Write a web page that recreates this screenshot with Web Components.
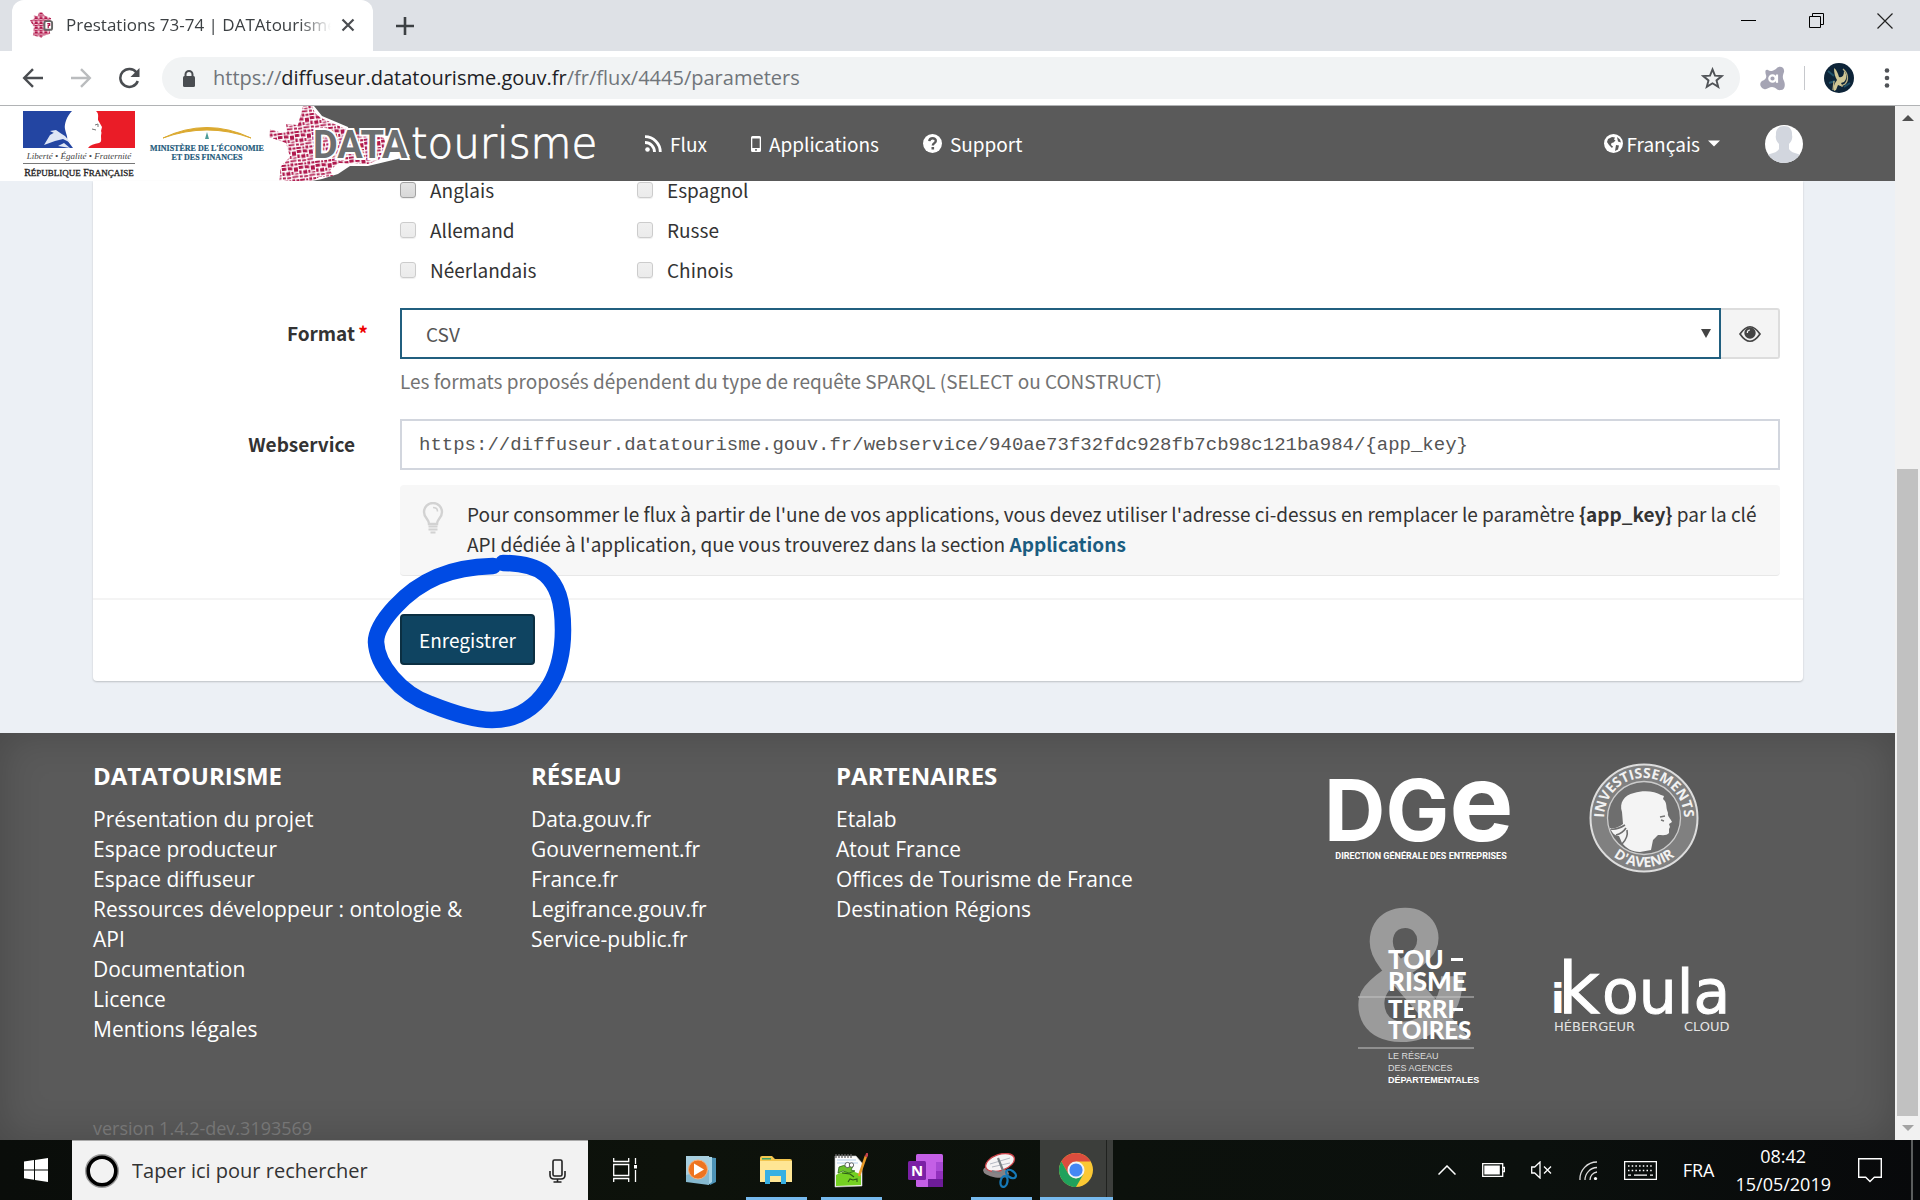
<!DOCTYPE html>
<html lang="fr">
<head>
<meta charset="utf-8">
<title>Prestations 73-74 | DATAtourisme</title>
<style>
  html, body { margin: 0; height: 100%; }
  body { overflow: hidden; }
</style>
</head>
<body>
<desktop-screen>
  <browser-tabs slot="browser"></browser-tabs>
  <address-bar slot="browser"></address-bar>
  <site-header slot="page"></site-header>
  <feed-form slot="page"></feed-form>
  <site-footer slot="page">
    <footer-links heading="DATATOURISME">
      <a href="#projet">Présentation du projet</a>
      <a href="#producteur">Espace producteur</a>
      <a href="#diffuseur">Espace diffuseur</a>
      <a href="#ressources">Ressources développeur : ontologie &amp; API</a>
      <a href="#documentation">Documentation</a>
      <a href="#licence">Licence</a>
      <a href="#mentions">Mentions légales</a>
    </footer-links>
    <footer-links heading="RÉSEAU">
      <a href="#data">Data.gouv.fr</a>
      <a href="#gouvernement">Gouvernement.fr</a>
      <a href="#france">France.fr</a>
      <a href="#legifrance">Legifrance.gouv.fr</a>
      <a href="#service-public">Service-public.fr</a>
    </footer-links>
    <footer-links heading="PARTENAIRES">
      <a href="#etalab">Etalab</a>
      <a href="#atout-france">Atout France</a>
      <a href="#offices">Offices de Tourisme de France</a>
      <a href="#destination">Destination Régions</a>
    </footer-links>
    <partner-logos></partner-logos>
  </site-footer>
  <scroll-bar slot="scroll"></scroll-bar>
  <task-bar slot="taskbar"></task-bar>
</desktop-screen>

<script>
function define(name, html, setup) {
  const tpl = document.createElement('template');
  tpl.innerHTML = html;
  customElements.define(name, class extends HTMLElement {
    constructor() {
      super();
      this.attachShadow({ mode: 'open' }).appendChild(tpl.content.cloneNode(true));
    }
    connectedCallback() { if (setup) setup(this, this.shadowRoot); }
  });
}

define('desktop-screen', `
<style>
  :host { display: flex; flex-direction: column; height: 100vh; overflow: hidden;
    --source: "Noto Sans CJK SC", "Open Sans", sans-serif;
    --open: "Open Sans", "Noto Sans", sans-serif;
    font-family: var(--source); background: #fff; }
  .view { flex: 1; min-height: 0; display: flex; border-top: 1px solid #b1b3b5; }
  .page { flex: 1; min-width: 0; display: flex; flex-direction: column; overflow: hidden; background: #ecf0f5; }
</style>
<slot name="browser"></slot>
<div class="view"><div class="page"><slot name="page"></slot></div><slot name="scroll"></slot></div>
<slot name="taskbar"></slot>
`);

define('browser-tabs', `
<style>
  :host { display: flex; height: 51px; background: #dee1e6; font-family: var(--open); }
  .tab { display: flex; align-items: center; width: 361px; margin-left: 12px; box-sizing: border-box;
    padding: 0 18px 2px 18px; background: #fff; border-radius: 12px 12px 0 0; color: #3c4043; }
  .title { flex: 1; margin: 0 10px 0 12px; overflow: hidden; white-space: nowrap; font-size: 17px; line-height: 24px;
    -webkit-mask-image: linear-gradient(90deg, #000 88%, transparent); mask-image: linear-gradient(90deg, #000 88%, transparent); }
  button { border: 0; padding: 0; background: none; display: flex; align-items: center; justify-content: center; }
  .new { width: 40px; margin-left: 12px; }
  .win { margin-left: auto; display: flex; height: 42px; padding-right: 1px; }
  .win button { width: 68px; }
</style>
<div class="tab">
  <svg width="24" height="26" viewBox="0 0 25 26"><defs><pattern id="t" width="5" height="5" patternUnits="userSpaceOnUse"><path d="M0 0h3v2H0zM3.500 1h1v3h-1zM0 3h2.800v1.500H0z" fill="#b0184c"/></pattern></defs>
    <path d="M9 0h4l2 3 7 3-2 8 1 8-6 2-3 2-9-2 1-9-4-7 4-1V3l4 1z" fill="#f3c9d6"/><path d="M9 0h4l2 3 7 3-2 8 1 8-6 2-3 2-9-2 1-9-4-7 4-1V3l4 1z" fill="url(#t)"/>
    <rect x="15" y="9" width="8" height="9" rx="2" fill="#fff" stroke="#666" stroke-width="2"/><path d="M18 11.500h2.500v2H19v3" fill="none" stroke="#b0184c" stroke-width="1.300"/></svg>
  <span class="title">Prestations 73-74 | DATAtourisme</span>
  <button aria-label="Fermer l'onglet"><svg width="14" height="14" viewBox="0 0 14 14"><path d="M1.500 1.500l11 11m0-11l-11 11" stroke="#4a4d51" stroke-width="2.200"/></svg></button>
</div>
<button class="new" aria-label="Nouvel onglet"><svg width="18" height="18" viewBox="0 0 18 18"><path d="M9 0v18M0 9h18" stroke="#3c4043" stroke-width="2.600"/></svg></button>
<div class="win">
  <button aria-label="Réduire"><svg width="16" height="16" viewBox="0 0 16 16"><path d="M0 7.500h15" stroke="#000"/></svg></button>
  <button aria-label="Restaurer"><svg width="16" height="16" viewBox="0 0 16 16"><path d="M.500 3.500h11v11H.500zM3.500 3.500v-3h11v11h-3" fill="none" stroke="#000"/></svg></button>
  <button aria-label="Fermer"><svg width="16" height="16" viewBox="0 0 16 16"><path d="M.500.500l15 15m0-15l-15 15" stroke="#222" stroke-width="1.200"/></svg></button>
</div>
`);

define('address-bar', `
<style>
  :host { display: flex; align-items: center; height: 54px; padding: 0 30px 0 22px; background: #fff; font-family: var(--open); }
  button { border: 0; padding: 0; background: none; display: flex; }
  .nav { display: flex; gap: 26px; margin-right: 22px; align-items: center; }
  .box { flex: 1; display: flex; align-items: center; box-sizing: border-box; height: 42px; border-radius: 21px;
    background: #f1f3f4; padding: 0 16px 0 20px; }
  .url { flex: 1; margin-left: 17px; font-size: 20px; line-height: 28px; color: #70757a; white-space: nowrap; }
  .url b { font-weight: 400; color: #202124; }
  .right { display: flex; align-items: center; margin-left: 20px; }
  .sep { width: 1px; height: 24px; background: #c6c8cc; margin: 0 19px; }
  .dots { margin-left: 30px; }
</style>
<div class="nav">
  <button aria-label="Précédent"><svg width="22" height="20" viewBox="0 0 22 20"><path d="M21 10H2.500M11 1.200L2.200 10l8.800 8.800" fill="none" stroke="#4a4d51" stroke-width="2.400"/></svg></button>
  <button aria-label="Suivant"><svg width="22" height="20" viewBox="0 0 22 20"><path d="M1 10h18.500M11 1.200l8.800 8.800-8.800 8.800" fill="none" stroke="#babcbe" stroke-width="2.400"/></svg></button>
  <button aria-label="Actualiser"><svg width="22" height="22" viewBox="0 0 22 22"><path d="M18.500 5.500A9 9 0 1 0 19.800 14" fill="none" stroke="#4a4d51" stroke-width="2.500"/><path d="M21.500 1v9h-9z" fill="#4a4d51"/></svg></button>
</div>
<div class="box">
  <svg width="14" height="17" viewBox="0 0 14 17"><rect x="1" y="6" width="12" height="11" rx="1.500" fill="#4a4d51"/><path d="M3.500 7V4.500a3.500 3.500 0 0 1 7 0V7" fill="none" stroke="#4a4d51" stroke-width="2"/></svg>
  <span class="url">https://<b>diffuseur.datatourisme.gouv.fr</b>/fr/flux/4445/parameters</span>
  <button aria-label="Favori"><svg width="23" height="22" viewBox="0 0 24 23"><path d="M12 2.500l2.600 6.500 7 .500-5.400 4.500 1.800 6.800-6-3.800-6 3.800 1.800-6.800L2.400 9.500l7-.500z" fill="none" stroke="#505357" stroke-width="2"/></svg></button>
</div>
<div class="right">
  <svg width="25" height="25" viewBox="0 0 25 25"><path d="M8 4c2 2 5 1 8-1 3-4 9-2 8 3-1 3-2 5 0 9 2 5 0 9-3 9-4 1-5-3-9-3-3 0-5 3-8 2-4-1-5-6-2-8 3-1 5-3 4-6-1-3-1-6 2-5z" fill="#a5a4b4"/><circle cx="12.500" cy="12.500" r="3.200" fill="none" stroke="#fff" stroke-width="2.200"/><path d="M17 8.500v8.300" stroke="#fff" stroke-width="2.200"/></svg>
  <span class="sep"></span>
  <svg width="30" height="30" viewBox="0 0 30 30"><circle cx="15" cy="15" r="15" fill="#0d2438"/><path d="M4 8l6 5M20 24l6-4M5 20l6-2" stroke="#1f5168" stroke-width="2"/><path d="M10 5c3 2 4 6 5 9 3 1 5-1 5-6 3 3 3 8 0 11l-3 1 2 4-5-2-2 5-2 1c-1-5 1-8 3-11-2-3-3-7-3-12z" fill="#cfc695"/><path d="M19 6c5 4 6 11 2 15l-4 2M10 18l-1 9" fill="none" stroke="#b9b184" stroke-width="1.300"/></svg>
  <svg class="dots" width="6" height="22" viewBox="0 0 6 22"><g fill="#505357"><circle cx="3" cy="3.500" r="2.300"/><circle cx="3" cy="11" r="2.300"/><circle cx="3" cy="18.500" r="2.300"/></g></svg>
</div>
`);

define('brand-logos', `
<style>:host { display: block; flex: none; } svg { display: block; }</style>
<svg width="602" height="75" viewBox="0 0 602 75">
  <defs>
    <pattern id="m" width="17" height="16" patternUnits="userSpaceOnUse" patternTransform="rotate(-7)">
      <path d="M0 0h4.500v3H0zM6 0l4.500.500V3.500L6 3zM12 1h4v4.500h-4zM0 4.500h2.500v3.500H0zM4 5l4-.500V8.500H4zM9.200 5h2v3H9.200zM9.500 9.500h6v1.800h-6zM12.500 7h3.500v1.300h-3.500zM0 9.500h3v2H0zM4.200 10h4v1.800h-4zM0 13h4.800v2H0zM6 13.200h2v2H6zM9.200 12.600h2.800v2.800H9.200zM13.200 13h3v2.200h-3z" fill="#b01a4e"/>
    </pattern>
  </defs>
  <path d="M0 0H314L322 10L348 21L350 28L392 30L410 50L368 60L350 60L338 68L322 73L312 75H0z" fill="#fff"/>
  <path d="M303 0h9l3 7 6 5 27 12 36 8 4 18-20 8-29-1-9 7 3 6-14 1-13 8-11 4-16-6 2-17 9-9-4-14-17-6 1-8 9 3h8l-1-8 12 1z" fill="url(#m)"/>
  <path d="M23 5h49c-5 5-8 13-7 18 1 5 3 8 2 11l6 8H23z" fill="#2345a2"/>
  <path d="M44 39l6-10 7-4 8 5 6 7-8-4-8 2zM50 25l6-1 10 7-6-1zM58 40l6-3 6 5z" fill="#dfe6f5"/>
  <path d="M96 5h39v37H88c2-3 6-4 11-5 3-1 2-4 2-7 0-2 1-3 0-5l1-4-4-7c0-4 1-6-2-9z" fill="#ea1c27"/>
  <path d="M95 19l3-1v3M92 23l4 1" stroke="#777" stroke-width="1" fill="none"/>
  <text x="79" y="53" font-family="Liberation Serif, serif" font-style="italic" font-size="9" text-anchor="middle" fill="#444">Liberté • Égalité • Fraternité</text>
  <path d="M23 57.500h112" stroke="#777"/>
  <text x="79" y="70" font-family="Liberation Serif, serif" font-size="10" text-anchor="middle" fill="#222" stroke="#222" stroke-width=".300">R<tspan font-size="9">ÉPUBLIQUE</tspan> F<tspan font-size="9">RANÇAISE</tspan></text>
  <path d="M163 32q44-21 88 0-44-16-88 0z" fill="#dba92f" stroke="#dba92f"/>
  <path d="M207 26l2 7h-4z" fill="#4d9c99"/>
  <text x="207" y="45" font-family="Liberation Serif, serif" font-weight="700" font-size="8" text-anchor="middle" fill="#1f5b7c" stroke="#1f5b7c" stroke-width=".200">MINISTÈRE DE L'ÉCONOMIE</text>
  <text x="207" y="54" font-family="Liberation Serif, serif" font-weight="700" font-size="8" text-anchor="middle" fill="#1f5b7c" stroke="#1f5b7c" stroke-width=".200">ET DES FINANCES</text>
  <text x="313" y="52" font-family="Roboto, sans-serif" font-weight="700" font-size="38" fill="#6c6f71" stroke="#fff" stroke-width="4" paint-order="stroke">DATA</text>
  <text x="411" y="52" font-family="DejaVu Sans, sans-serif" font-weight="200" font-size="42" fill="#fff" stroke="#fff" stroke-width=".800">tourisme</text>
</svg>
`);

define('nav-link', `
<style>
  :host { display: block; }
  a { display: flex; align-items: center; gap: var(--gap, 8px); color: #fff; text-decoration: none; font-size: 19px; line-height: 28px; }
  ::slotted(svg) { display: block; }
</style>
<a href="#nav"><slot name="icon"></slot><slot></slot></a>
`);

define('site-header', `
<style>
  :host { display: flex; align-items: center; height: 75px; flex: none; background: #5a5a5a; padding-right: 92px; }
  nav { display: flex; gap: 44px; margin-left: 43px; flex: 1; }
  .lang { --gap: 3px; margin-right: 45px; }
  .lang .caret { margin-left: 5px; }
  .avatar { display: block; }
</style>
<brand-logos></brand-logos>
<nav>
  <nav-link><svg slot="icon" width="17" height="17" viewBox="0 0 17 17"><circle cx="2.500" cy="14.500" r="2.300" fill="#fff"/><path d="M0 7.500A9.500 9.500 0 0 1 9.500 17M0 1.700A15.300 15.300 0 0 1 15.300 17" fill="none" stroke="#fff" stroke-width="2.800"/></svg>Flux</nav-link>
  <nav-link><svg slot="icon" width="10" height="16" viewBox="0 0 10 16"><path fill-rule="evenodd" d="M1.500 0h7Q10 0 10 1.500v13Q10 16 8.500 16h-7Q0 16 0 14.500v-13Q0 0 1.500 0zM1.300 2.500v9.500h7.400V2.500zM4.200 13v1.700h1.600V13z" fill="#fff"/></svg>Applications</nav-link>
  <nav-link><svg slot="icon" width="19" height="19" viewBox="0 0 19 19"><circle cx="9.500" cy="9.500" r="9.500" fill="#fff"/><path d="M6.300 7.200c.300-4 6.700-3.700 6.500-.300 0 2.200-3 2.200-3 4.600" fill="none" stroke="#5a5a5a" stroke-width="2.400"/><rect x="8.500" y="13" width="2.600" height="2.500" fill="#5a5a5a"/></svg>Support</nav-link>
</nav>
<nav-link class="lang"><svg slot="icon" width="19" height="19" viewBox="0 0 19 19"><circle cx="9.500" cy="9.500" r="9.500" fill="#fff"/><path d="M4 5l4-2 3 .500-1 2 1.500 1-2 2-2 .500-.500 2 2 1.500-1 1.500-3-3-2-3zM13 3l3 2.500 1 3-3-1zM12 11l3 .500-1 4-3 1.500z" fill="#5a5a5a"/></svg>Français<svg class="caret" width="12" height="7" viewBox="0 0 12 7"><path d="M0 .500h12L6 6.500z" fill="#fff"/></svg></nav-link>
<svg class="avatar" width="38" height="38" viewBox="0 0 38 38"><defs><clipPath id="c"><circle cx="19" cy="19" r="19"/></clipPath></defs><g clip-path="url(#c)"><rect width="38" height="38" fill="#fff"/><path d="M19 1c6 0 8.500 4 8 9 1 4-1 7-3 9v5c2 4 8 4 11 6v9H3v-9c3-2 9-2 11-6v-5c-2-2-4-5-3-9-.500-5 2-9 8-9z" fill="#d2d6de"/></g></svg>
`);

define('form-row', `
<style>
  :host { display: grid; grid-template-columns: 307px 1fr; padding-right: 23px; }
  .label { display: flex; justify-content: flex-end; align-items: center; height: 50px; padding-right: 32px; font-weight: 700; }
  .mark { width: 13px; }
</style>
<div class="label"><slot name="label"></slot><slot name="mark"><span class="mark"></span></slot></div>
<div><slot></slot></div>
`);

define('feed-form', `
<style>
  :host { display: block; flex: none; padding: 0 92px 52px 93px; color: #333; font-size: 19px; line-height: 30px; }
  .panel { background: #fff; border-radius: 0 0 4px 4px; box-shadow: 0 1px 2px rgba(0,0,0,.2); position: relative; }
  .langs { display: grid; grid-template-columns: 237px 1fr; row-gap: 22px; margin-left: 307px; padding-bottom: 29px; }
  .langs label { display: flex; align-items: center; gap: 14px; height: 18px; line-height: 18px; }
  .langs input { appearance: none; box-sizing: border-box; width: 16px; height: 16px; margin: 0; border: 1px solid #ccc; border-radius: 3px;
    background: linear-gradient(#f0f0f0, #ebebeb); box-shadow: 0 1px 1px #eee; }
  .langs input.on { border-color: #a2a2a2; background: linear-gradient(#e4e4e4, #d8d8d8); }
  .star { width: 13px; text-align: right; color: #e00; }
  .group { display: flex; position: relative; }
  select, input.url { box-sizing: border-box; height: 51px; border: 2px solid #d2d6de; border-radius: 0; background: #fff; color: #555; width: 100%; }
  select { appearance: none; flex: 1; min-width: 0; padding: 0 24px; border-color: #215f7f; font: 19px var(--source); outline: 0; }
  .arrow { position: absolute; right: 69px; top: 21px; pointer-events: none; }
  .eye { width: 59px; box-sizing: border-box; border: 2px solid #ddd; border-left: 0; border-radius: 0 3px 3px 0; background: #f4f4f4;
    display: flex; align-items: center; justify-content: center; padding: 0; }
  .help { margin: 7px 0 23px; color: #737373; }
  input.url { display: block; padding: 0 17px; font: 19px/36px "Liberation Mono", monospace; }
  .tip { display: flex; margin-top: 15px; padding: 14px 15px 16px 22px; background: #f7f7f7; border-bottom: 1px solid #e8e8e8; border-radius: 4px; }
  .tip svg { flex: none; margin: 3px 23px 0 0; }
  .tip p { margin: 0; }
  a { color: #1b5c80; font-weight: 700; text-decoration: none; }
  .actions { margin-top: 22px; border-top: 2px solid #f4f4f4; padding: 14px 0 16px 307px; }
  .save { display: block; box-sizing: border-box; width: 135px; height: 51px; border: 2px solid #0b2f42; border-radius: 4px; background: #0f4461; color: #fff; padding: 0;
    font: 19px var(--source); }
  .ring { position: absolute; left: 267px; top: 370px; pointer-events: none; z-index: 2; }
</style>
<div class="panel">
  <div class="langs">
    <label><input type="checkbox" class="on">Anglais</label><label><input type="checkbox">Espagnol</label>
    <label><input type="checkbox">Allemand</label><label><input type="checkbox">Russe</label>
    <label><input type="checkbox">Néerlandais</label><label><input type="checkbox">Chinois</label>
  </div>
  <form-row>
    <label slot="label" for="format">Format</label><span slot="mark" class="star">*</span>
    <div class="group">
      <select id="format"><option>CSV</option></select>
      <svg class="arrow" width="10" height="9" viewBox="0 0 10 9"><path d="M0 0h10L5 9z" fill="#444"/></svg>
      <button class="eye" aria-label="Aperçu"><svg width="22" height="18" viewBox="0 0 22 18"><path d="M1 9Q11-5.500 21 9 11 23.500 1 9z" fill="none" stroke="#444" stroke-width="1.700"/><circle cx="11" cy="8" r="5.700" fill="#444"/><path d="M8.300 8c0-2 1-3 2.700-3" fill="none" stroke="#f4f4f4" stroke-width="1.200"/></svg></button>
    </div>
    <p class="help">Les formats proposés dépendent du type de requête SPARQL (SELECT ou CONSTRUCT)</p>
  </form-row>
  <form-row>
    <label slot="label" for="ws">Webservice</label>
    <input class="url" id="ws" type="text" value="https://diffuseur.datatourisme.gouv.fr/webservice/940ae73f32fdc928fb7cb98c121ba984/{app_key}">
    <div class="tip">
      <svg width="22" height="32" viewBox="0 0 22 32"><path d="M7 22c0-5-5-6-5-12a9 9 0 0 1 18 0c0 6-5 7-5 12z" fill="none" stroke="#d2d2d2" stroke-width="2.400"/><path d="M11 5.500c3 0 4.500 1.800 4.500 4" fill="none" stroke="#d2d2d2" stroke-width="1.600"/><path d="M6.500 24.500h9M6.500 27.500h9M8.500 30.500h5" stroke="#d2d2d2" stroke-width="2.200"/></svg>
      <p>Pour consommer le flux à partir de l'une de vos applications, vous devez utiliser l'adresse ci-dessus en remplacer le paramètre <b>{app_key}</b> par la clé API dédiée à l'application, que vous trouverez dans la section <a href="#applications">Applications</a></p>
    </div>
  </form-row>
  <div class="actions"><button class="save">Enregistrer</button></div>
  <svg class="ring" width="220" height="190" viewBox="360 551 220 190"><path d="M493 566C450 567 420 580 395 607 383 620 376 632 376 642 377 665 400 693 430 704 455 714 475 720 492 720 520 720 538 705 550 685 560 668 563 650 563 630 563 600 557 585 545 574 535 566 520 563 503 563" fill="none" stroke="#004be4" stroke-width="16.500" stroke-linecap="round"/></svg>
</div>
`);

define('footer-links', `
<style>
  :host { display: block; padding-right: 40px; }
  h2 { margin: 0 0 13px; font-size: 24px; line-height: 30px; font-weight: 700; color: #fff; }
  ::slotted(a) { display: block; color: #fff; text-decoration: none; font-size: 21px; line-height: 30px; }
</style>
<h2></h2><slot></slot>
`, (el, root) => { root.querySelector('h2').textContent = el.getAttribute('heading'); });

define('partner-logos', `
<style>
  :host { display: grid; grid-template-columns: 1fr 1fr; grid-template-rows: 110px 1fr; row-gap: 33px; justify-items: center; align-items: center; padding-top: 2px; }
  svg { display: block; overflow: visible; }
</style>
<svg width="180" height="84" viewBox="0 0 180 84" fill="#fff">
  <text x="-7" y="65" font-family="Inter, sans-serif" font-weight="700" font-size="85">DG<tspan font-size="108">e</tspan></text>
  <text x="90" y="83" font-size="9" text-anchor="middle" font-weight="700" font-family="Roboto, sans-serif">DIRECTION GÉNÉRALE DES ENTREPRISES</text>
</svg>
<svg width="110" height="110" viewBox="0 0 110 110">
  <defs><path id="dn" d="M6 55a49 49 0 0 0 98 0"/><path id="arc" d="M20.400 75A40 40 0 1 1 89.600 75"/></defs>
  <circle cx="55" cy="55" r="53.500" fill="#808080" stroke="#ddd" stroke-width="2"/><circle cx="55" cy="55" r="36.500" fill="#6e6e6e" stroke="#ccc" stroke-width="1.300"/>
  <text fill="#f2f2f2" font-family="Open Sans, sans-serif" font-weight="700" font-size="14" text-anchor="middle"><textPath href="#arc" startOffset="50%">INVESTISSEMENTS</textPath></text>
  <text fill="#f2f2f2" font-family="Open Sans, sans-serif" font-weight="700" font-size="14" text-anchor="middle"><textPath href="#dn" startOffset="50%">D'AVENIR</textPath></text>
  <path d="M33 49c-3-9 2-17 12-19 9-3 21-2 27 2l3 1-1 3c4 3 3 7 4 11l1 3c-1 3 3 6 4 9l-3 2 1 3-1 2v4c-2 3-7 2-11 2l-5 5-2 10-11 2c-8 0-14-4-18-9l-3-7c-4 0-7-3-9-8 5 1 9-1 13-4z" fill="#f4f4f4"/>
  <path d="M22 66c5 1 9-1 14-4M27 72c4-1 8-4 10-7M33 81c4-4 6-9 5-14" fill="none" stroke="#6e6e6e" stroke-width="1.600"/><path d="M71 54l5-1M72 57l3 1" stroke="#777" stroke-width="1.500"/>
</svg>
<svg width="125" height="180" viewBox="0 0 125 180" fill="#fff">
  <text x="-6" y="134" font-family="Roboto, sans-serif" font-weight="700" font-size="184" fill="#9b9b9b">&amp;</text>
  <g font-family="Lato, sans-serif" font-weight="900"><text x="30" y="63" font-size="26">TOU</text><text x="30" y="85" font-size="26">RISME</text><text x="30" y="112" font-size="24">TERRI</text><text x="30" y="133" font-size="24">TOIRES</text></g>
  <path d="M0 91h116M0 142h116" stroke="#c4c4c4"/><path d="M93 52h12v3H93zM95 102h10v3H95z"/>
  <g font-family="Liberation Sans, sans-serif" font-size="9" fill="#ddd"><text x="30" y="153">LE RÉSEAU</text><text x="30" y="165">DES AGENCES</text><text x="30" y="177" font-weight="700" fill="#fff">DÉPARTEMENTALES</text></g>
</svg>
<svg width="180" height="76" viewBox="0 0 180 76" fill="#fff" font-family="DejaVu Sans, sans-serif">
  <text x="-3" y="55" font-size="40" font-weight="700">i</text><text x="4" y="55" font-size="72" stroke="#fff">k</text><text x="48" y="55" font-size="60" stroke="#fff">oula</text>
  <g font-size="13" fill="#e4e4e4"><text x="0" y="73">HÉBERGEUR</text><text x="130" y="73">CLOUD</text></g>
</svg>
`);

define('site-footer', `
<style>
  :host { display: flex; flex-direction: column; flex: 1; min-height: 0; box-sizing: border-box; padding: 28px 92px 0 93px; background: #5a5a5a;
    box-shadow: inset 0 0 40px rgba(0,0,0,.2); font-family: var(--open); }
  .cols { display: grid; grid-template-columns: 438fr 305fr 473fr 446fr 48fr; }
  .version { margin: auto 0 -3px; font-size: 18px; line-height: 30px; color: #757575; }
</style>
<div class="cols"><slot></slot></div>
<p class="version">version 1.4.2-dev.3193569</p>
`);

define('scroll-bar', `
<style>
  :host { display: flex; flex-direction: column; width: 25px; background: #f1f1f1; }
  .cap { height: 24px; display: flex; align-items: center; justify-content: center; }
  .gap { flex: 339; } .thumb { flex: 647; margin: 0 2px; background: #c1c1c1; }
</style>
<div class="cap"><svg width="12" height="6" viewBox="0 0 12 6"><path d="M0 6h12L6 0z" fill="#505050"/></svg></div>
<div class="gap"></div><div class="thumb"></div>
<div class="cap"><svg width="12" height="6" viewBox="0 0 12 6"><path d="M0 0h12L6 6z" fill="#a3a3a3"/></svg></div>
`);

define('task-button', `
<style>
  :host { display: block; width: 75px; height: 60px; }
  button { width: 100%; height: 100%; border: 0; padding: 0; background: none; display: flex; align-items: center; justify-content: center; position: relative; }
  :host([open]) button::after { content: ""; position: absolute; left: 8px; right: 6px; bottom: 0; height: 3px; background: #76b9ed; }
  :host([active]) button { background: linear-gradient(90deg, transparent 2px, #3c3e3b 2px 68px, #20221f 68px 69px, #3c3e3b 69px); }
  :host([active]) button::after { left: 2px; right: 0; }
</style>
<button><slot></slot></button>
`, (el, root) => root.querySelector('button').setAttribute('aria-label', el.getAttribute('name')));

define('task-bar', `
<style>
  :host { display: flex; height: 60px; flex: none; background: linear-gradient(90deg, #0a0d0a, #0d120b 35%, #0b100d 80%, #08090b); color: #fff; font-family: var(--open); }
  svg { display: block; }
  .start { width: 72px; border: 0; padding: 0; background: none; display: flex; align-items: center; justify-content: center; }
  .search { display: flex; align-items: center; box-sizing: border-box; width: 516px; padding: 0 22px 0 13px; background: #f2f2f2; border-top: 1px solid #aaa; }
  .search input { flex: 1; min-width: 0; margin-left: 13px; border: 0; padding: 0; background: none; outline: 0; font: 20px var(--open); color: #333; }
  .search input::placeholder { color: #333; opacity: 1; }
  .tray { margin-left: auto; display: flex; align-items: center; font-size: 18px; }
  .tray svg { margin-right: 26px; }
  .fra { margin-right: 21px; }
  .clock { text-align: center; line-height: 28px; margin-right: 27px; }
  .tray .note { margin-right: 29px; }
  .peek { width: 7px; height: 60px; border-left: 2px solid #5b5d5d; }
</style>
<button class="start" aria-label="Démarrer"><svg width="24" height="24" viewBox="0 0 24 24"><path d="M0 3.500l10-1.400v9.300H0zM11 2l13-2v11.400H11zM0 12.400h10v9.400L0 20.300zM11 12.400h13V24l-13-2z" fill="#fff"/></svg></button>
<div class="search">
  <svg width="34" height="34" viewBox="0 0 34 34"><circle cx="17" cy="17" r="15.500" fill="none" stroke="#999" stroke-width="3"/><circle cx="17" cy="17" r="13.800" fill="none" stroke="#000" stroke-width="3.600"/></svg>
  <input type="text" aria-label="Rechercher" placeholder="Taper ici pour rechercher">
  <svg width="17" height="24" viewBox="0 0 17 24"><rect x="4" y="1" width="9" height="16" rx="1.500" fill="none" stroke="#222" stroke-width="1.600"/><path d="M1 12v4q0 4 4 4h7q4 0 4-4v-4M8.500 20v3M4.500 23h8" fill="none" stroke="#222" stroke-width="1.600"/></svg>
</div>
<task-button name="Vue des tâches"><svg width="25" height="24" viewBox="0 0 25 24"><path d="M.700 0v3.500h15V0M.700 6.500h15v11h-15zM.700 24v-3.500h15V24M22.500 0v6M22.500 12v12" fill="none" stroke="#fff" stroke-width="1.300"/><path d="M21 7h3v3.500h-3z" fill="#fff"/></svg></task-button>
<task-button name="Lecteur multimédia"><svg width="30" height="31" viewBox="0 0 30 31"><path d="M8 1l22 2v24l-6 3z" fill="#4d93b7"/><path d="M5 1l21 1v25l-4 3z" fill="#a5d3e6"/><path d="M0 1l23 0v29L0 27z" fill="#86b9d0"/><path d="M0 1h23v14L0 20z" fill="#a8cfdf"/><circle cx="12" cy="14.500" r="9.500" fill="#ee7420" stroke="#f7b17d"/><path d="M8 8.500v12L18 14.500z" fill="#fff"/></svg></task-button>
<task-button name="Explorateur" open><svg width="32" height="28" viewBox="0 0 32 28"><path d="M0 2q0-2 2-2h10l3 3h15q2 0 2 2v21H0z" fill="#f3c64f"/><path d="M0 5h32v21H0z" fill="#ffe694"/><path d="M2 2h9v1.500H2z" fill="#3da26b"/><path d="M5 28V14h21v14h-5v-8H10v8z" fill="#38b0e3"/></svg></task-button>
<task-button name="Notepad++" open><svg width="34" height="35" viewBox="0 0 34 35"><path d="M1 3h21l6 7v23L1 34z" fill="#fcfcfc" stroke="#ccc" stroke-width=".600"/><path d="M3 7h19M3 10h21" stroke="#b3cde8"/><path d="M2 22Q15 14 27 22v10L2 33z" fill="#75d022"/><path d="M5 14q5-3 9 0l5-1-2 4 4 1-6 2-6-2-5 2z" fill="#6cc02b" stroke="#2f6a1d" stroke-width=".800"/><circle cx="13.500" cy="12" r="2.600" fill="#fff" stroke="#333" stroke-width=".700"/><circle cx="17.500" cy="12" r="2.200" fill="#fff" stroke="#333" stroke-width=".700"/><path d="M14 29l2-3 3 1 4-1v3M8 20l8 1 4 3" fill="none" stroke="#2c5a18" stroke-width="1.100"/><path d="M2 1v4M5 1v4M8 1v4M11 1v4M14 1v4M17 1v4" stroke="#666" stroke-width="1.300"/><path d="M32 3L25 23" stroke="#e89a28" stroke-width="2.500"/><path d="M33.500 0L32 4" stroke="#c3414b" stroke-width="2.500"/></svg></task-button>
<task-button name="OneNote"><svg width="35" height="33" viewBox="0 0 35 33"><rect x="8" width="27" height="33" rx="1.500" fill="#c45fe6"/><path d="M28 8h7v9h-7z" fill="#a848d3"/><path d="M28 17h7v8h-7z" fill="#9230bd"/><path d="M20 25h15v8H20z" fill="#6d1c99"/><rect y="7" width="18" height="19" rx="1.500" fill="#7b20a5"/><text x="9" y="22" text-anchor="middle" fill="#fff" font-family="Open Sans, sans-serif" font-size="15" font-weight="700">N</text></svg></task-button>
<task-button name="Outil Capture" open><svg width="35" height="35" viewBox="0 0 35 35"><ellipse cx="13" cy="19" rx="13" ry="5.500" fill="#8b8385" transform="rotate(8 13 19)"/><ellipse cx="17" cy="9.500" rx="15" ry="8" transform="rotate(-19 17 9.500)" fill="#f6f4f5" stroke="#cc454b" stroke-width="1.400"/><path d="M7 11l20-6M9 14l18-4" stroke="#b5b9c3"/><path d="M15 5l6 15M9 18l11 3" stroke="#7c8388" stroke-width="2.200"/><ellipse cx="28" cy="21" rx="5.500" ry="3.400" transform="rotate(35 28 21)" fill="none" stroke="#1679b8" stroke-width="2.300"/><ellipse cx="21" cy="28.500" rx="3.400" ry="5.500" transform="rotate(12 21 28.500)" fill="none" stroke="#1679b8" stroke-width="2.300"/></svg></task-button>
<task-button name="Chrome" open active><svg width="34" height="34" viewBox="0 0 34 34"><circle cx="17" cy="17" r="17" fill="#fbc834"/><path d="M17 17V8.500h14.700A17 17 0 0 0 2.300 8.500L9.600 21.200z" fill="#dc4d3e"/><path d="M2.300 8.500A17 17 0 0 0 17 34l7.400-12.800L17 25.500 9.600 21.200z" fill="#20a15c"/><circle cx="17" cy="17" r="8.500" fill="#f4f4f4"/><circle cx="17" cy="17" r="6.600" fill="#4487f4"/></svg></task-button>
<div class="tray">
  <svg width="18" height="10" viewBox="0 0 18 10"><path d="M.500 9.500L9 1l8.500 8.500" fill="none" stroke="#fff" stroke-width="1.500"/></svg>
  <svg width="23" height="14" viewBox="0 0 23 14"><path d="M.700.700h20v12.600h-20zM21 4.500h1.500v4H21" fill="none" stroke="#fff" stroke-width="1.300"/><path d="M2.300 2.500h15.500v9H2.300z" fill="#fff"/></svg>
  <svg width="22" height="18" viewBox="0 0 22 18"><path d="M.700 6h3L9 1v16l-5.300-5h-3zM13 5.500l7 7m0-7l-7 7" fill="none" stroke="#fff" stroke-width="1.300"/></svg>
  <svg width="19" height="19" viewBox="0 0 19 19"><g fill="none" stroke="#ddd" stroke-width="1.300"><path d="M1 19A17 17 0 0 1 18 1M6 19A12.500 12.500 0 0 1 18 6.500M11 19a8 8 0 0 1 7-8"/></g><circle cx="16.500" cy="17.500" r="1.600" fill="#fff"/></svg>
  <svg width="33" height="19" viewBox="0 0 33 19"><rect x=".600" y=".600" width="31.800" height="17.800" fill="none" stroke="#fff" stroke-width="1.300"/><path d="M4 5h25M4 9.500h25" stroke="#fff" stroke-width="1.300" stroke-dasharray="1.500 2.200"/><path d="M4 14.200h3M10 14.200h13M26 14.200h3" stroke="#fff" stroke-width="1.300"/></svg>
  <span class="fra">FRA</span>
  <div class="clock">08:42<br>15/05/2019</div>
  <svg class="note" width="24" height="25" viewBox="0 0 24 25"><path d="M.700.700h22.600v18.600h-7L12 23.500l-4.300-4.200h-7z" fill="none" stroke="#fff" stroke-width="1.400"/></svg>
  <span class="peek"></span>
</div>
`);
</script>
</body>
</html>
